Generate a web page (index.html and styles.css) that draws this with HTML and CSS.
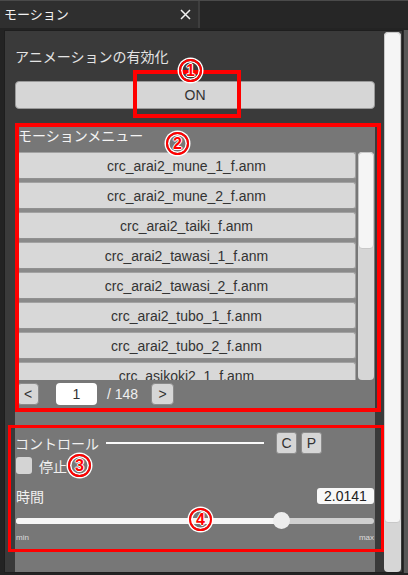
FILE: index.html
```html
<!DOCTYPE html>
<html lang="ja">
<head>
  <meta charset="UTF-8">
  <title>モーション</title>
  <link rel="stylesheet" href="styles.css">
</head>
<body>

<div class="titlebar">
  <div class="tab">
    <span class="tab-title">モーション</span>
    <svg class="close" width="11" height="11" viewBox="0 0 11 11">
      <path d="M1 1 L10 10 M10 1 L1 10" stroke="#f2f2f2" stroke-width="1.5" fill="none"/>
    </svg>
  </div>
</div>

<div class="frame">
  <div class="panel">
    <div class="content">
      <div class="label">アニメーションの有効化</div>
      <button class="btn wide">ON</button>

      <div class="gray">
        <div class="menu-head">モーションメニュー</div>
        <div class="list">
          <div class="items">
            <div class="item">crc_arai2_mune_1_f.anm</div>
            <div class="item">crc_arai2_mune_2_f.anm</div>
            <div class="item">crc_arai2_taiki_f.anm</div>
            <div class="item">crc_arai2_tawasi_1_f.anm</div>
            <div class="item">crc_arai2_tawasi_2_f.anm</div>
            <div class="item">crc_arai2_tubo_1_f.anm</div>
            <div class="item">crc_arai2_tubo_2_f.anm</div>
            <div class="item">crc_asikoki2_1_f.anm</div>
          </div>
          <div class="vscroll small"><div class="thumb"></div></div>
        </div>
        <div class="pager">
          <button class="btn page-btn">&lt;</button>
          <div class="page-input">1</div>
          <span class="page-total">/ 148</span>
          <button class="btn page-btn next">&gt;</button>
        </div>

        <div class="control">
          <div class="ctl-head">
            <span>コントロール</span>
            <span class="rule"></span>
            <button class="btn mini first">C</button>
            <button class="btn mini">P</button>
          </div>
          <div class="check-row">
            <span class="check"></span>
            <span>停止</span>
          </div>
          <div class="time-row">
            <span>時間</span>
            <span class="value">2.0141</span>
          </div>
          <div class="slider">
            <div class="fill" style="width: 74.3%"></div>
            <div class="knob" style="left: calc(74.3% - 8.5px)"></div>
          </div>
          <div class="range">
            <span>min</span>
            <span>max</span>
          </div>
        </div>
      </div>
    </div>
    <div class="vscroll big"><div class="thumb"></div></div>
  </div>
  <div class="behind"></div>
</div>

<!-- red annotation overlay -->
<div class="mark box1"></div>
<div class="mark box2"></div>
<div class="mark box4"></div>
<span class="num n1">1</span>
<span class="num n2">2</span>
<span class="num n3">3</span>
<span class="num n4">4</span>

</body>
</html>
```

FILE: styles.css
```css
body {
  margin: 0;
  width: 408px;
  height: 575px;
  overflow: hidden;
  position: relative;
  background: #232323;
  font-family: "Liberation Sans", "Noto Sans CJK JP", sans-serif;
  font-size: 14px;
  color: #e8e8e8;
}

button {
  font-family: inherit;
}

.titlebar {
  height: 28px;
  box-sizing: border-box;
  border-top: 1px solid #4a4a4a;
  background: #262626;
  display: flex;
}

.tab {
  width: 200px;
  box-sizing: border-box;
  background: #2f2f2f;
  border-right: 2px solid #3e3e3e;
  display: flex;
  align-items: center;
  justify-content: space-between;
  padding: 0 7px 0 4px;
}

.tab-title {
  font-size: 13px;
  color: #f2f2f2;
  line-height: 18px;
}

.frame {
  display: flex;
  padding: 2px 0 0 4px;
  height: 545px;
  box-sizing: border-box;
}

.panel {
  width: 399px;
  height: 543px;
  box-sizing: border-box;
  background: #3a3a3a;
  border: 1px solid #1e1e1e;
  padding: 0 1px 0 10px;
  display: flex;
  gap: 9px;
}

.behind {
  width: 5px;
  background: #585858;
  border-left: 1px solid #2a2a2a;
}

.content {
  width: 360px;
  display: flex;
  flex-direction: column;
  overflow: hidden;
}

.label {
  margin-top: 16px;
  line-height: 20px;
  color: #e4e4e4;
}

.btn {
  background: #d6d6d6;
  border: 1px solid #9a9a9a;
  border-radius: 4px;
  color: #333;
  font-size: 14px;
  padding: 0;
  box-sizing: border-box;
}

.wide {
  margin-top: 14px;
  height: 28px;
  width: 360px;
}

.gray {
  margin-top: 15px;
  flex: 1;
  background: #777;
  padding-right: 1px;
}

.menu-head {
  height: 28px;
  box-sizing: border-box;
  padding: 2px 0 0 3px;
  line-height: 20px;
  color: #f4f4f4;
}

.list {
  height: 228px;
  display: flex;
  gap: 2px;
  padding-left: 2px;
  overflow: hidden;
}

.items {
  width: 339px;
  background: #8a8a8a;
}

.item {
  height: 27px;
  box-sizing: border-box;
  margin-bottom: 3px;
  background: #d8d8d8;
  border: 1px solid #a2a2a2;
  border-bottom-color: #909090;
  border-radius: 3px;
  color: #333;
  display: flex;
  align-items: center;
  justify-content: center;
}

.vscroll {
  background: #d6d6d6;
  border-radius: 4px;
  display: flex;
  flex-direction: column;
}

.vscroll .thumb {
  background: #f5f5f5;
  border-radius: 4px;
  border: 1px solid #c8c8c8;
  box-sizing: border-box;
}

.vscroll.small {
  width: 16px;
}

.vscroll.small .thumb {
  height: 97px;
}

.vscroll.big {
  width: 17px;
  margin-top: 1px;
  height: 540px;
}

.vscroll.big .thumb {
  height: 491px;
}

.pager {
  margin-top: 3px;
  height: 22px;
  display: flex;
  align-items: center;
  padding-left: 2px;
}

.page-btn {
  width: 22px;
  height: 22px;
  border-color: #8a8a8a;
}

.page-btn.next {
  width: 23px;
  margin-left: 13px;
}

.page-input {
  margin-left: 17px;
  width: 41px;
  height: 22px;
  background: #fff;
  border-radius: 4px;
  color: #333;
  text-align: center;
  line-height: 22px;
}

.page-total {
  margin-left: 10px;
  color: #f0f0f0;
}

.control {
  margin-top: 27px;
  padding-left: 1px;
}

.ctl-head {
  height: 22px;
  display: flex;
  align-items: center;
  margin-left: -1px;
  color: #f0f0f0;
}

.rule {
  margin-left: 7px;
  width: 158px;
  height: 2px;
  background: #fafafa;
}

.mini {
  width: 21px;
  height: 22px;
  margin-left: 4px;
  border-color: #8c8c8c;
  border-radius: 3px;
}

.mini.first {
  margin-left: 12px;
}

.check-row {
  margin-top: 3px;
  height: 17px;
  display: flex;
  align-items: center;
  color: #f0f0f0;
}

.check {
  width: 16px;
  height: 17px;
  background: #d4d4d4;
  border-radius: 3px;
  margin-right: 7px;
}

.time-row {
  margin-top: 14px;
  height: 16px;
  display: flex;
  justify-content: space-between;
  align-items: center;
  color: #f0f0f0;
}

.value {
  width: 57px;
  height: 16px;
  background: #f8f8f8;
  border-radius: 3px;
  color: #222;
  text-align: center;
  line-height: 16px;
}

.slider {
  margin-top: 8px;
  height: 17px;
  position: relative;
  display: flex;
  align-items: center;
}

.slider::before {
  content: "";
  position: absolute;
  left: 0;
  right: 0;
  top: 5.5px;
  height: 6px;
  background: #d0d0d0;
  border-radius: 3px;
}

.fill {
  position: relative;
  height: 6px;
  background: #f6f6f6;
  border-radius: 3px;
}

.knob {
  position: absolute;
  top: 0;
  width: 17px;
  height: 17px;
  border-radius: 50%;
  background: #ededed;
}

.range {
  margin-top: 4px;
  height: 10px;
  display: flex;
  justify-content: space-between;
  font-size: 8px;
  line-height: 10px;
  color: #dcdcdc;
}

/* annotation overlay */
.mark {
  position: absolute;
  box-sizing: border-box;
  border: 4px solid #ff0000;
}

.box1 {
  left: 133px;
  top: 70px;
  width: 108px;
  height: 48px;
}

.box2 {
  left: 15px;
  top: 123px;
  width: 366px;
  height: 289px;
}

.box4 {
  left: 8px;
  top: 425px;
  width: 376px;
  height: 127px;
  border-width: 3px;
}

.num {
  position: absolute;
  width: 23px;
  height: 23px;
  box-sizing: border-box;
  border: 2px solid #ff0000;
  border-radius: 50%;
  box-shadow: 0 0 0 1.5px #fff, inset 0 0 0 1.5px #fff;
  color: #ff0000;
  font-weight: bold;
  font-size: 16px;
  line-height: 19px;
  text-align: center;
  text-shadow: 1px 0 #fff, -1px 0 #fff, 0 1px #fff, 0 -1px #fff;
}

.n1 { left: 179px; top: 59px; }
.n2 { left: 166px; top: 132px; }
.n3 { left: 68px; top: 454px; }
.n4 { left: 189px; top: 508px; }
```
